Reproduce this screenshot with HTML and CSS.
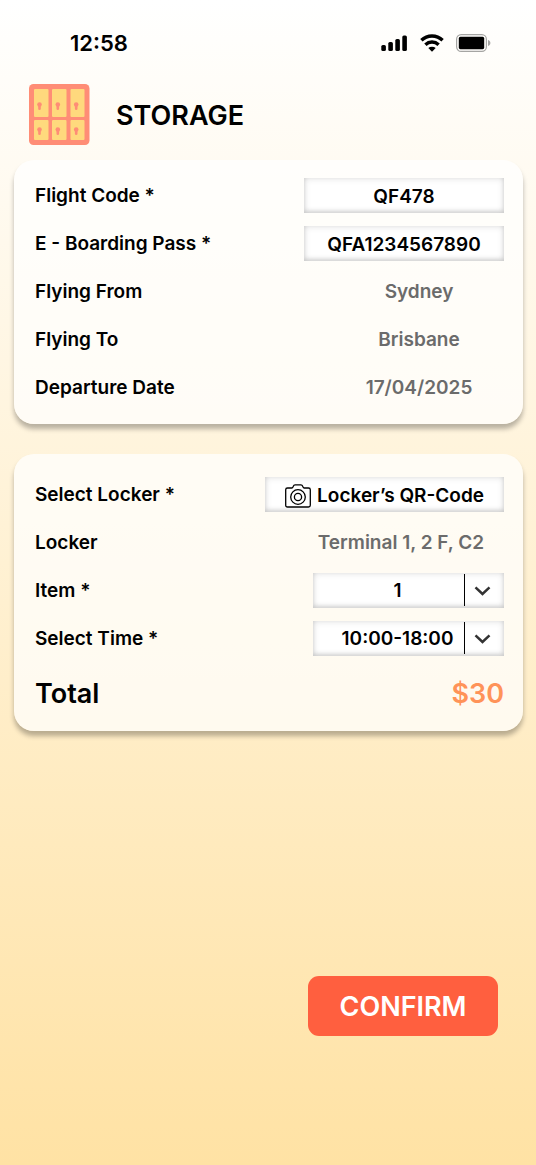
FILE: index.html
```html
<!DOCTYPE html>
<html lang="en">
<head>
<meta charset="utf-8">
<meta name="viewport" content="width=device-width, initial-scale=1">
<title>Storage</title>
<link rel="stylesheet" href="styles.css">
</head>
<body>
<div class="screen">
  <div class="status">
    <span class="clock">12:58</span>
    <div class="indicators">
      <svg width="27" height="16" viewBox="0 0 27 16" aria-hidden="true">
        <rect x="0.3" y="10" width="4.6" height="6" rx="1.6"/>
        <rect x="7.3" y="7" width="4.6" height="9" rx="1.6"/>
        <rect x="14.3" y="4" width="4.6" height="12" rx="1.6"/>
        <rect x="21.3" y="0.5" width="4.6" height="15.5" rx="1.6"/>
      </svg>
      <svg width="24" height="18" viewBox="0 0 24 18" aria-hidden="true">
        <g fill="none" stroke="#000" stroke-width="3.4">
          <path d="M1.4 6.2a15.3 15.3 0 0 1 21.2 0"/>
          <path d="M5.400 10.700a9.600 9.600 0 0 1 13.200 0"/>
        </g>
        <path d="M12 17.800l-3.700-3.700a5.400 5.400 0 0 1 7.400 0z"/>
      </svg>
      <svg width="35" height="18" viewBox="0 0 35 18" aria-hidden="true">
        <rect x="0.6" y="0.6" width="29.8" height="16.8" rx="4.6" fill="none" stroke="#a5a5a3" stroke-width="1.2"/>
        <rect x="2.800" y="2.800" width="25.400" height="12.400" rx="1.600"/>
        <path d="M32 6v6c1.600-.7 2.400-1.700 2.400-3S33.600 6.700 32 6z" fill="#a5a5a3"/>
      </svg>
    </div>
  </div>

  <header class="heading">
    <svg width="61" height="61" viewBox="0 0 61 61" aria-hidden="true">
      <defs>
        <g id="keyhole"><circle r="2.3"/><path d="M-1.300 0h2.600v4.200a1.300 1.300 0 0 1-2.600 0z"/></g>
      </defs>
      <rect width="60.500" height="61" rx="4.500" fill="#ff8d76"/>
      <g fill="#ffd97d">
        <rect x="5" y="5" width="14.500" height="28" rx="1"/>
        <rect x="23" y="5" width="14.500" height="28" rx="1"/>
        <rect x="41.500" y="5" width="14" height="28" rx="1"/>
        <rect x="5" y="36" width="14.500" height="20" rx="1"/>
        <rect x="23" y="36" width="14.500" height="20" rx="1"/>
        <rect x="41.500" y="36" width="14" height="20" rx="1"/>
      </g>
      <g fill="#ff8d76">
        <use href="#keyhole" x="10.500" y="20.500"/>
        <use href="#keyhole" x="28.800" y="20.500"/>
        <use href="#keyhole" x="47.200" y="20.500"/>
        <use href="#keyhole" x="10.500" y="45.500"/>
        <use href="#keyhole" x="28.800" y="45.500"/>
        <use href="#keyhole" x="47.200" y="45.500"/>
      </g>
    </svg>
    <h1 class="title">STORAGE</h1>
  </header>

  <form class="form">
    <section class="card">
      <div class="row">
        <label for="flight">Flight Code *</label>
        <input class="field text-field" id="flight" type="text" value="QF478">
      </div>
      <div class="row">
        <label for="pass">E - Boarding Pass *</label>
        <input class="field text-field" id="pass" type="text" value="QFA1234567890">
      </div>
      <div class="row"><span>Flying From</span><span class="value">Sydney</span></div>
      <div class="row"><span>Flying To</span><span class="value">Brisbane</span></div>
      <div class="row"><span>Departure Date</span><span class="value">17/04/2025</span></div>
    </section>

    <section class="card locker-card">
      <div class="row">
        <label for="scan">Select Locker *</label>
        <button class="field scan" id="scan" type="button">
          <svg width="26" height="24" viewBox="0 0 26 24" fill="none" stroke="#000" stroke-width="1.300" aria-hidden="true">
            <path d="M2.500 4h4.300c.9 0 1-.5 1.400-1.500.4-1.200.9-1.700 1.900-1.700h5.800c1 0 1.500.5 1.900 1.700.4 1 .5 1.500 1.400 1.500h4.300c1.200 0 1.800.7 1.800 1.800v15.400c0 1.200-.6 1.800-1.800 1.800h-21C1.300 23 .7 22.400.7 21.200V5.800C.7 4.700 1.300 4 2.500 4z"/>
            <circle cx="13" cy="13" r="7.300"/>
            <circle cx="13" cy="13" r="3.600"/>
          </svg>
          <span>Locker’s QR-Code</span>
        </button>
      </div>
      <div class="row"><span>Locker</span><span class="value locker">Terminal 1, 2 F, C2</span></div>
      <div class="row">
        <label for="item">Item *</label>
        <span class="picker">
          <select class="field select" id="item"><option>1</option><option>2</option><option>3</option></select>
          <svg class="arrow" width="17" height="10" viewBox="0 0 17 10" aria-hidden="true"><path d="M1.500 1.300l7 6.700 7-6.700"/></svg>
        </span>
      </div>
      <div class="row">
        <label for="time">Select Time *</label>
        <span class="picker">
          <select class="field select" id="time"><option>10:00-18:00</option></select>
          <svg class="arrow" width="17" height="10" viewBox="0 0 17 10" aria-hidden="true"><path d="M1.500 1.300l7 6.700 7-6.700"/></svg>
        </span>
      </div>
      <div class="row total"><span>Total</span><span class="price">$30</span></div>
    </section>

    <button class="confirm" type="submit">CONFIRM</button>
  </form>
</div>
</body>
</html>
```
FILE: styles.css
```css
* {
  box-sizing: border-box;
}

body {
  margin: 0;
  font-family: Inter, "Liberation Sans", sans-serif;
  font-size: 19px;
  font-weight: 600;
  color: #000;
}

.screen {
  min-height: 100vh;
  background: linear-gradient(#fff, #ffe2a4);
}

.status {
  display: flex;
  justify-content: space-between;
  align-items: center;
  padding: 31px 45px 0 70px;
}

.clock {
  font-size: 22px;
  line-height: 24px;
}

.indicators {
  display: flex;
  align-items: center;
  gap: 12px;
}

.heading {
  display: flex;
  align-items: center;
  gap: 26px;
  padding: 29px 29px 15px;
}

.title {
  margin: 0;
  padding-top: 2px;
  font-size: 27px;
  line-height: 32px;
  font-weight: 600;
}

.form {
  display: flex;
  flex-direction: column;
  padding: 0 13px 0 14px;
}

.card {
  display: flex;
  flex-direction: column;
  gap: 13px;
  padding: 18px 19px 19px 21px;
  border-radius: 20px;
  background: rgba(255, 255, 255, 0.72);
  box-shadow: 0 5px 5px rgba(0, 0, 0, 0.28);
}

.locker-card {
  margin-top: 30px;
  padding-top: 23px;
  padding-bottom: 14px;
}

.row {
  display: flex;
  justify-content: space-between;
  align-items: center;
  height: 35px;
}

.field {
  height: 35px;
  border: 0;
  border-radius: 0;
  padding: 0;
  background: #fff;
  box-shadow:
    inset 0 -2px 4px rgba(0, 0, 0, 0.12),
    inset 0 0 7px rgba(0, 0, 0, 0.14);
  color: #000;
  font: inherit;
  text-align: center;
}

.text-field {
  width: 200px;
  padding-top: 2px;
}

.value {
  min-width: 170px;
  text-align: center;
  color: #6b6b6b;
}

.locker {
  padding-right: 20px;
}

.scan {
  display: flex;
  align-items: center;
  gap: 6px;
  padding: 2px 20px 0;
}

.picker {
  position: relative;
  display: flex;
  width: 191px;
}

.select {
  width: 100%;
  appearance: none;
  padding: 0 42px 0 20px;
  text-align-last: center;
}

.picker::after {
  content: "";
  position: absolute;
  top: 1px;
  bottom: 2px;
  right: 39px;
  width: 1px;
  background: #000;
}

.arrow {
  position: absolute;
  top: 13px;
  right: 13px;
  fill: none;
  stroke: #333;
  stroke-width: 2.500;
  pointer-events: none;
}

.total {
  height: 48px;
  font-size: 27px;
}

.price {
  color: #ff9359;
}

.confirm {
  align-self: flex-end;
  width: 190px;
  height: 60px;
  margin: 245px 25px 0 0;
  border: 0;
  border-radius: 11px;
  background: #ff5f3f;
  color: #fff;
  font: inherit;
  font-size: 27px;
}
```
